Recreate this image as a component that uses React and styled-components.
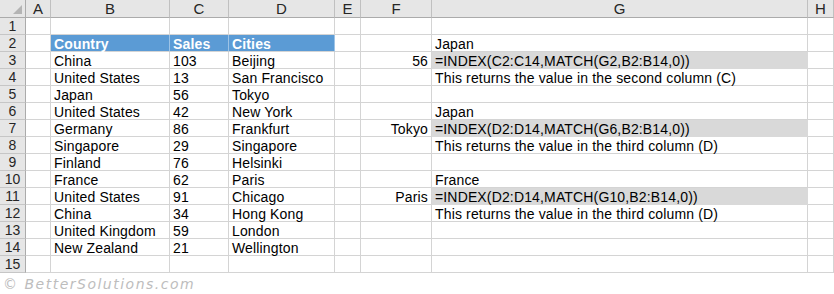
import React from 'react';
import styled, { createGlobalStyle } from 'styled-components';

const GlobalStyle = createGlobalStyle`
  html, body {
    margin: 0;
    padding: 0;
    background: #ffffff;
  }
  * {
    box-sizing: border-box;
  }
`;

const columns = [
  { key: 'A', width: 25 },
  { key: 'B', width: 119 },
  { key: 'C', width: 59 },
  { key: 'D', width: 106 },
  { key: 'E', width: 26 },
  { key: 'F', width: 71 },
  { key: 'G', width: 376 },
  { key: 'H', width: 26 },
];

const rows = [
  {},
  { B: 'Country', C: 'Sales', D: 'Cities', G: 'Japan', header: true },
  { B: 'China', C: '103', D: 'Beijing', F: '56', G: '=INDEX(C2:C14,MATCH(G2,B2:B14,0))', formula: true },
  { B: 'United States', C: '13', D: 'San Francisco', G: 'This returns the value in the second column (C)' },
  { B: 'Japan', C: '56', D: 'Tokyo' },
  { B: 'United States', C: '42', D: 'New York', G: 'Japan' },
  { B: 'Germany', C: '86', D: 'Frankfurt', F: 'Tokyo', G: '=INDEX(D2:D14,MATCH(G6,B2:B14,0))', formula: true },
  { B: 'Singapore', C: '29', D: 'Singapore', G: 'This returns the value in the third column (D)' },
  { B: 'Finland', C: '76', D: 'Helsinki' },
  { B: 'France', C: '62', D: 'Paris', G: 'France' },
  { B: 'United States', C: '91', D: 'Chicago', F: 'Paris', G: '=INDEX(D2:D14,MATCH(G10,B2:B14,0))', formula: true },
  { B: 'China', C: '34', D: 'Hong Kong', G: 'This returns the value in the third column (D)' },
  { B: 'United Kingdom', C: '59', D: 'London' },
  { B: 'New Zealand', C: '21', D: 'Wellington' },
  {},
];

const Sheet = styled.div`
  display: grid;
  grid-template-columns: 26px ${columns.map((c) => `${c.width}px`).join(' ')};
  grid-template-rows: 18px repeat(${rows.length}, 17px);
  width: 834px;
  font-family: "Liberation Sans", Arial, sans-serif;
  font-size: 14px;
  color: #000000;
`;

const Corner = styled.div`
  display: flex;
  align-items: flex-end;
  justify-content: flex-end;
  padding: 0 3px 3px 0;
  background: #e6e6e6;
  border-right: 1px solid #ababab;
  border-bottom: 1px solid #ababab;
`;

const ColHead = styled.div`
  display: flex;
  align-items: center;
  justify-content: center;
  background: #e6e6e6;
  border-right: 1px solid #c0c0c0;
  border-bottom: 1px solid #ababab;
  color: #262626;
  font-size: 15px;
`;

const RowHead = styled.div`
  display: flex;
  align-items: center;
  justify-content: center;
  background: #e6e6e6;
  border-right: 1px solid #ababab;
  border-bottom: 1px solid #c6c6c6;
  color: #262626;
  font-size: 14px;
`;

const fills = {
  header: '#5b9bd5',
  formula: '#d9d9d9',
};

const Cell = styled.div`
  display: flex;
  align-items: center;
  justify-content: ${(p) => (p.$right ? 'flex-end' : 'flex-start')};
  padding: 1px 3px 0 3px;
  white-space: nowrap;
  overflow: visible;
  letter-spacing: 0.15px;
  background: ${(p) => fills[p.$fill] || 'transparent'};
  border-right: 1px solid ${(p) => (p.$fill === 'header' ? '#9dc3e6' : p.$fill === 'formula' ? '#d9d9d9' : '#d4d4d4')};
  border-bottom: 1px solid ${(p) => (p.$fill === 'formula' ? '#d9d9d9' : '#d4d4d4')};
  color: ${(p) => (p.$fill === 'header' ? '#ffffff' : '#000000')};
  font-weight: ${(p) => (p.$fill === 'header' ? 700 : 400)};
  position: relative;
  z-index: ${(p) => (p.$text ? 1 : 0)};
`;

const Watermark = styled.div`
  padding: 3px 0 0 3px;
  height: 21px;
  font-family: "DejaVu Sans", sans-serif;
  font-style: italic;
  font-size: 14px;
  letter-spacing: 1.5px;
  color: #bdbdbd;
`;

const CornerMark = () => (
  <svg width="9" height="9" viewBox="0 0 9 9">
    <polygon points="9,0 9,9 0,9" fill="#b4b4b4" />
  </svg>
);

const fillFor = (row, key) => {
  if (row.header && ['B', 'C', 'D'].includes(key)) return 'header';
  if (row.formula && key === 'G') return 'formula';
  return undefined;
};

const App = () => (
  <>
    <GlobalStyle />
    <Sheet>
      <Corner>
        <CornerMark />
      </Corner>
      {columns.map((c) => (
        <ColHead key={c.key}>{c.key}</ColHead>
      ))}
      {rows.map((row, idx) => (
        <React.Fragment key={idx}>
          <RowHead>{idx + 1}</RowHead>
          {columns.map((c) => (
            <Cell
              key={c.key}
              $fill={fillFor(row, c.key)}
              $right={c.key === 'F'}
              $text={!!row[c.key]}
            >
              {row[c.key]}
            </Cell>
          ))}
        </React.Fragment>
      ))}
    </Sheet>
    <Watermark>© BetterSolutions.com</Watermark>
  </>
);

export default App;
